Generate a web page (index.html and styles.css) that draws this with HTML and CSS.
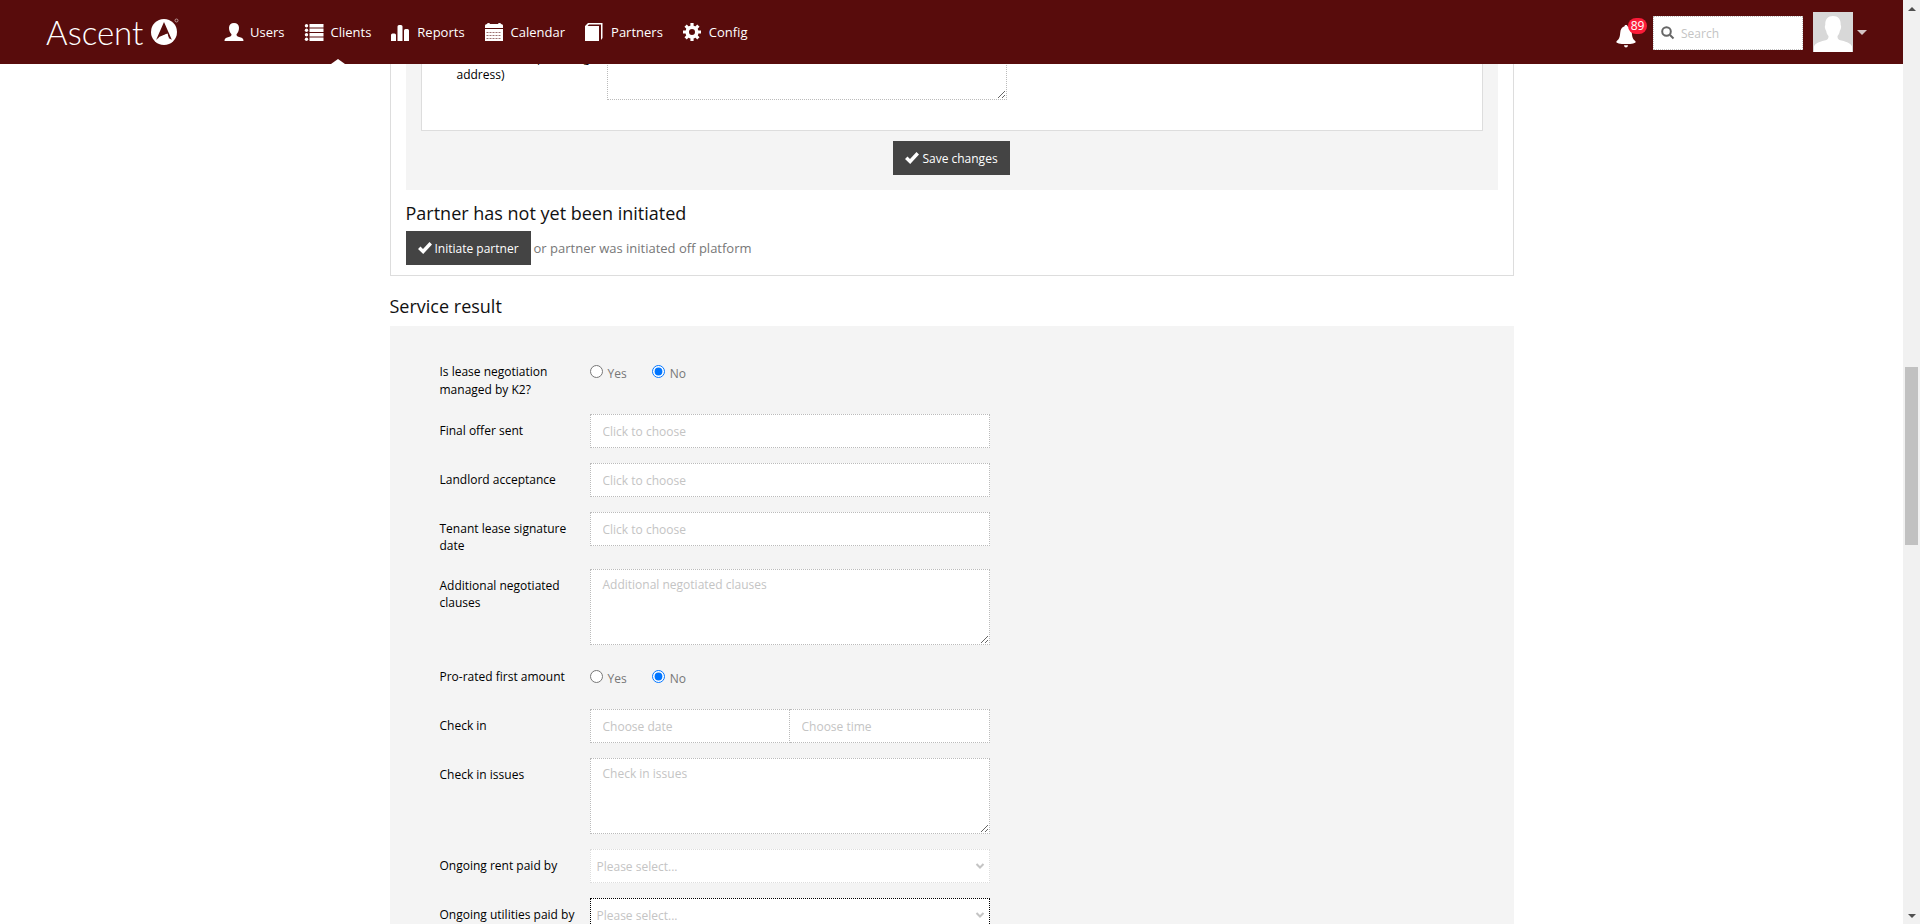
FILE: index.html
```html
<!DOCTYPE html>
<html lang="en">
<head>
<meta charset="utf-8">
<title>Ascent – Clients</title>
<link rel="stylesheet" href="styles.css">
</head>
<body>
<div class="window">
  <header class="topbar">
    <a class="logo" href="#" aria-label="Ascent">
      <span class="logo-word">Ascent</span>
      <svg class="logo-mark" viewBox="0 0 28 28" aria-hidden="true">
        <circle cx="13" cy="14" r="13" fill="#fff"/>
        <path d="M13 4 20.800 21.800 17.500 20 16.300 15.800 9 19.300 5.200 21.800Z" fill="#580c0c"/>
        <path d="M8.500 18.800 16.400 15.400 18 20.500 14.500 18.500 6 21.300Z" fill="#fff"/>
        <circle cx="25.500" cy="2.500" r="1.500" fill="none" stroke="#cfb5b5" stroke-width=".8"/>
      </svg>
    </a>
    <nav class="menu">
      <a class="menu-item" href="#">
        <svg viewBox="0 0 20 18" aria-hidden="true"><path d="M10 0C7 0 5 1.800 5 4.800 5 7.500 6 10 7.500 11.200 7.500 13 6.500 13.500 4 14.300 1.500 15 .5 15.500.5 18h19c0-2.500-1-3-3.500-3.700-2.500-.8-3.500-1.300-3.500-3.100C14 10 15 7.500 15 4.800 15 1.800 13 0 10 0Z"/></svg>
        <span>Users</span>
      </a>
      <a class="menu-item menu-item-active" href="#">
        <svg viewBox="0 0 20 18" aria-hidden="true"><path d="M5.500 1H19.500V4.500H5.500ZM5.500 5.500H19.500V9H5.500ZM5.500 10H19.500V13.500H5.500ZM5.500 14.500H19.500V18H5.500Z"/><circle cx="2.500" cy="2.700" r="1.700"/><circle cx="2.500" cy="7.200" r="1.700"/><circle cx="2.500" cy="11.700" r="1.700"/><circle cx="2.500" cy="16.200" r="1.700"/></svg>
        <span>Clients</span>
      </a>
      <a class="menu-item" href="#">
        <svg viewBox="0 0 20 18" aria-hidden="true"><path d="M0 18V12q0-1.500 1.500-1.500h2Q5 10.500 5 12v6ZM6.500 18V3.500Q6.500 2 8 2h2Q11.500 2 11.500 3.500V18ZM13 18V7.500Q13 6 14.500 6h2Q18 6 18 7.500V18Z"/></svg>
        <span>Reports</span>
      </a>
      <a class="menu-item" href="#">
        <svg viewBox="0 0 20 18" aria-hidden="true"><path d="M0 5V2.500Q0 1 2 1 2 0 3.500 0T5 1h8q0-1 1.500-1T16 1q2 0 2 1.500V5ZM0 6h18v12H0Z"/><path d="M1.500 9.500h15M1.500 12.500h15M1.500 15.500h15" stroke="#9c7070" stroke-dasharray="2 1"/></svg>
        <span>Calendar</span>
      </a>
      <a class="menu-item" href="#">
        <svg viewBox="0 0 20 18" aria-hidden="true"><path d="M0 3h14v15H0ZM3 0h14.500v15l-1.500 2V1.500H4L2.500 3H0Z"/></svg>
        <span>Partners</span>
      </a>
      <a class="menu-item" href="#">
        <svg viewBox="0 0 20 18" aria-hidden="true"><circle cx="9" cy="9" r="4.800" fill="none" stroke="#fff" stroke-width="3.600"/><path d="M9 0V4M9 14V18M0 9H4M14 9H18M2.600 2.600 5.300 5.300M12.700 12.700 15.400 15.400M2.600 15.400 5.300 12.700M12.700 5.300 15.400 2.600" stroke="#fff" stroke-width="3.200"/></svg>
        <span>Config</span>
      </a>
    </nav>
    <div class="tools">
      <button class="bell" type="button" aria-label="Notifications">
        <svg viewBox="0 0 24 26" aria-hidden="true"><path d="M12 1c1 0 1.500.5 1.600 1.400C17 3.400 18 6 18.300 9.500c.4 5 1.200 7 4.200 9.500.5 2-4 2.800-10.500 2.800S1 21 1.500 19c3-2.500 3.800-4.500 4.200-9.500C6 6 7 3.400 10.400 2.400 10.500 1.500 11 1 12 1ZM9.800 23h4.400q-.2 2.500-2.200 2.500T9.800 23Z"/></svg>
        <span class="badge">89</span>
      </button>
      <label class="search">
        <svg viewBox="0 0 14 14" aria-hidden="true"><circle cx="5.500" cy="5.500" r="4.300"/><path d="M9 9 12.500 12.500"/></svg>
        <input type="text" placeholder="Search" aria-label="Search">
      </label>
      <button class="account" type="button" aria-label="Account">
        <svg class="avatar" viewBox="0 0 40 40" aria-hidden="true"><path fill="#d8d8d8" d="M0 0h40v40H0z"/><path fill="#fff" d="M20 4c5 0 8 3 7.700 9 .8 1 .5 4-.9 6-.5 3-1.500 4-2.300 5 0 3 .8 3.700 4 4.500 6 1.500 9.500 3 10.500 6V40H1v-5.500c1-3 4.500-4.500 10.500-6 3.200-.8 4-1.500 4-4.500-.8-1-1.800-2-2.300-5-1.400-2-1.700-5-.9-6C12 7 15 4 20 4Z"/></svg>
        <span class="caret"></span>
      </button>
    </div>
  </header>

  <main class="page">
    <section class="partner">
      <div class="partner-form">
        <div class="card">
          <div class="row">
            <label class="row-label card-label" for="notes">Home details (providing address)</label>
            <textarea class="field area" id="notes"></textarea>
          </div>
        </div>
        <button class="btn" type="button">
          <svg viewBox="0 0 14 12" aria-hidden="true"><path d="M0 7 2.500 4.500 5 7 11.500 0 14 2.500 5.200 12Z"/></svg>
          <span>Save changes</span>
        </button>
      </div>
      <h2 class="title">Partner has not yet been initiated</h2>
      <p class="initiate">
        <button class="btn" type="button">
          <svg viewBox="0 0 14 12" aria-hidden="true"><path d="M0 7 2.500 4.500 5 7 11.500 0 14 2.500 5.200 12Z"/></svg>
          <span>Initiate partner</span>
        </button>
        <a class="off-platform" href="#">or partner was initiated off platform</a>
      </p>
    </section>

    <h2 class="title result-title">Service result</h2>
    <form class="result">
      <div class="row" role="radiogroup" aria-labelledby="lease">
        <span class="row-label label-loose" id="lease">Is lease negotiation managed by K2?</span>
        <div class="choices">
          <label class="choice"><input type="radio" name="lease"><span>Yes</span></label>
          <label class="choice"><input type="radio" name="lease" checked><span>No</span></label>
        </div>
      </div>
      <div class="row">
        <label class="row-label" for="offer">Final offer sent</label>
        <input class="field" id="offer" type="text" placeholder="Click to choose">
      </div>
      <div class="row">
        <label class="row-label" for="landlord">Landlord acceptance</label>
        <input class="field" id="landlord" type="text" placeholder="Click to choose">
      </div>
      <div class="row">
        <label class="row-label" for="tenant">Tenant lease signature date</label>
        <input class="field" id="tenant" type="text" placeholder="Click to choose">
      </div>
      <div class="row">
        <label class="row-label" for="clauses">Additional negotiated clauses</label>
        <textarea class="field area" id="clauses" placeholder="Additional negotiated clauses"></textarea>
      </div>
      <div class="row" role="radiogroup" aria-labelledby="prorated">
        <span class="row-label" id="prorated">Pro-rated first amount</span>
        <div class="choices">
          <label class="choice"><input type="radio" name="prorated"><span>Yes</span></label>
          <label class="choice"><input type="radio" name="prorated" checked><span>No</span></label>
        </div>
      </div>
      <div class="row">
        <label class="row-label" for="checkin">Check in</label>
        <div class="pair">
          <input class="field" id="checkin" type="text" placeholder="Choose date">
          <input class="field" type="text" placeholder="Choose time" aria-label="Check in time">
        </div>
      </div>
      <div class="row">
        <label class="row-label" for="issues">Check in issues</label>
        <textarea class="field area" id="issues" placeholder="Check in issues"></textarea>
      </div>
      <div class="row">
        <label class="row-label" for="rent">Ongoing rent paid by</label>
        <div class="select">
          <select class="field select-disabled" id="rent"><option>Please select...</option></select>
          <svg viewBox="0 0 10 8" aria-hidden="true"><path d="M1.500 2 5 5.500 8.500 2"/></svg>
        </div>
      </div>
      <div class="row">
        <label class="row-label" for="utilities">Ongoing utilities paid by</label>
        <div class="select">
          <select class="field select-focus" id="utilities"><option>Please select...</option></select>
          <svg viewBox="0 0 10 8" aria-hidden="true"><path d="M1.500 2 5 5.500 8.500 2"/></svg>
        </div>
      </div>
    </form>
  </main>

  <div class="scrollbar" aria-hidden="true">
    <span class="arrow arrow-up"></span>
    <span class="track"><span class="thumb"></span></span>
    <span class="arrow arrow-down"></span>
  </div>
</div>
</body>
</html>
```
FILE: styles.css
```css
* {
  box-sizing: border-box;
}

body {
  margin: 0;
  font: 12px/17px "Open Sans", sans-serif;
  color: #000;
  background: #fff;
}

a {
  color: inherit;
  text-decoration: none;
}

button {
  font: inherit;
  border: 0;
  padding: 0;
  background: none;
  cursor: pointer;
}

.window {
  display: grid;
  grid-template: 64px 1fr / 1fr 17px;
  height: 100vh;
  overflow: hidden;
}

/* top bar */

.topbar {
  display: flex;
  align-items: center;
  padding: 0 36px 0 46px;
  background: #580c0c;
  color: #fff;
}

.logo {
  display: flex;
  align-items: center;
  gap: 8px;
  width: 178px;
}

.logo-word {
  font: 300 33px/36px Lato, "Open Sans", sans-serif;
}

.logo-mark {
  flex: none;
  width: 28px;
  height: 28px;
}

.menu {
  display: flex;
  align-self: stretch;
  gap: 20px;
}

.menu-item {
  position: relative;
  display: flex;
  align-items: center;
  gap: 6px;
  font-size: 13px;
  font-weight: 500;
}

.menu-item svg {
  width: 20px;
  height: 18px;
  fill: #fff;
}

.menu-item-active::after {
  content: "";
  position: absolute;
  left: 50%;
  bottom: 0;
  margin-left: -7px;
  border: 7px solid transparent;
  border-top: 0;
  border-bottom: 5px solid #fff;
}

.tools {
  display: flex;
  align-items: center;
  margin-left: auto;
}

.bell {
  position: relative;
  width: 38px;
  height: 24px;
  margin-top: 8px;
  text-align: left;
}

.bell svg {
  display: block;
  width: 22px;
  height: 24px;
  fill: #fff;
}

.badge {
  position: absolute;
  top: -6px;
  left: 13px;
  width: 19px;
  border-radius: 8px;
  background: #fb1b38;
  color: #fff;
  line-height: 16px;
  text-align: center;
}

.search {
  display: flex;
  align-items: center;
  gap: 6px;
  width: 150px;
  height: 34px;
  margin-top: 2px;
  padding-left: 7px;
  border: 1px dotted #c4c4c4;
  background: #fff;
}

.search svg {
  flex: none;
  width: 14px;
  height: 14px;
  fill: none;
  stroke: #666;
  stroke-width: 2;
}

.search input {
  width: 100%;
  padding: 0;
  border: 0;
  outline: 0;
  font: inherit;
}

::placeholder {
  color: #c4c4c4;
  opacity: 1;
}

.account {
  display: flex;
  align-items: center;
  gap: 4px;
  margin-left: 10px;
}

.avatar {
  width: 40px;
  height: 40px;
}

.caret {
  border: 5px solid transparent;
  border-top-color: #d5c5c5;
  border-bottom: 0;
}

/* page */

.page {
  grid-column: 1;
  width: 100%;
  max-width: 1124px;
  margin: 0 auto;
  overflow: hidden;
}

.partner {
  padding: 0 15px 10px;
  border: 1px solid #ddd;
  border-top: 0;
}

.partner-form {
  display: flex;
  flex-direction: column;
  align-items: center;
  gap: 10px;
  padding: 0 15px 15px;
  background: #f4f4f4;
}

.card {
  align-self: stretch;
  margin-top: -42px;
  padding: 1px 35px 15px;
  border: 1px solid #ddd;
  background: #fff;
}

.title {
  margin: 0;
  padding-top: 11px;
  font-size: 18px;
  line-height: 24px;
  font-weight: 400;
  color: #111;
}

.btn {
  display: inline-flex;
  align-items: center;
  gap: 3px;
  height: 34px;
  padding: 0 12px;
  background: #444;
  color: #fff;
}

.btn svg {
  width: 14px;
  height: 12px;
  fill: #fff;
}

.initiate {
  display: flex;
  align-items: center;
  gap: 3px;
  margin: 6px 0 0;
}

.off-platform {
  font-size: 13px;
  color: #777;
}

.result-title {
  padding: 18px 0 8px;
}

/* form rows */

.result {
  padding: 29px 50px 0;
  background: #f4f4f4;
}

.row {
  display: grid;
  grid-template-columns: 142px minmax(0, 400px);
  column-gap: 8px;
  margin-bottom: 15px;
}

.row-label {
  padding-top: 8px;
}

.card-label {
  padding-top: 25px;
}

.label-loose {
  line-height: 18px;
}

.field {
  display: block;
  width: 100%;
  height: 34px;
  margin: 0;
  padding: 0 12px;
  border: 1px dotted #bbb;
  border-radius: 0;
  outline: 0;
  background: #fff;
  font: inherit;
}

.area {
  height: 76px;
  padding: 6px 12px;
  resize: vertical;
}

.pair {
  display: grid;
  grid-template-columns: 1fr 1fr;
}

.pair .field + .field {
  border-left: 0;
}

.choices {
  display: flex;
  gap: 25px;
  height: 34px;
  padding-top: 10px;
}

.choice {
  display: flex;
  align-items: flex-start;
  gap: 5px;
  color: #777;
}

.choice input {
  width: 13px;
  height: 13px;
  margin: 0;
}

.select {
  position: relative;
}

.select .field {
  appearance: none;
  padding: 0 6px;
  color: #c4c4c4;
}

.select svg {
  position: absolute;
  top: 13px;
  right: 5px;
  width: 10px;
  height: 8px;
  fill: none;
  stroke: #c4c4c4;
  stroke-width: 2;
  pointer-events: none;
}

.select .select-disabled {
  border-color: #ddd;
}

.select .select-focus {
  border-color: #000;
}

/* scroll bar */

.scrollbar {
  grid-area: 1 / 2 / 3 / 3;
  display: flex;
  flex-direction: column;
  align-items: center;
  justify-content: space-between;
  padding: 7px 0 6px;
  background: #f1f1f1;
}

.arrow {
  border: 4px solid transparent;
}

.arrow-up {
  border-top: 0;
  border-bottom-color: #505050;
}

.arrow-down {
  border-bottom: 0;
  border-top-color: #505050;
}

.track {
  display: flex;
  flex-direction: column;
  flex: 1;
}

.track::before {
  content: "";
  flex: 356;
}

.track::after {
  content: "";
  flex: 369;
}

.thumb {
  flex: 178;
  width: 13px;
  background: #c1c1c1;
}
```
